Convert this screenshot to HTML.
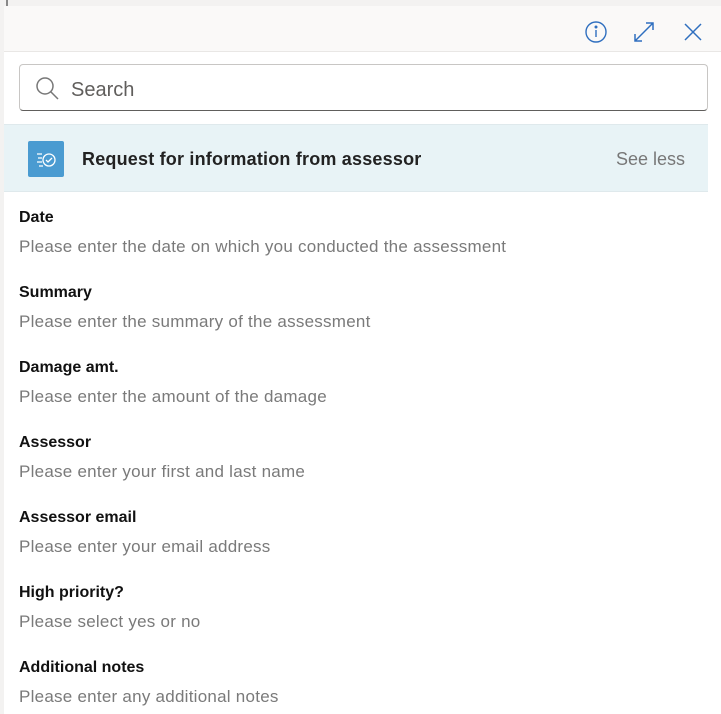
<!DOCTYPE html>
<html><head><style>
body{margin:0;width:721px;height:714px;overflow:hidden;background:#f3f2f1;font-family:"Liberation Sans",sans-serif;position:relative}
.panel{position:absolute;left:4px;top:6px;width:717px;height:708px;background:#fff}
.hdr{position:absolute;left:0;top:0;width:717px;height:45px;background:#faf9f8;border-bottom:1px solid #e9e7e5}
.search{position:absolute;left:15px;top:58px;width:687px;height:45px;border:1px solid #c8c6c4;border-bottom:1px solid #605e5c;border-radius:4px;background:#fff}
.search span{position:absolute;left:51px;top:14px;font-size:20px;color:#605e5c}
.band{position:absolute;left:0;top:118px;width:704px;height:66px;background:#e8f3f6;border-top:1px solid #dfe9ec;border-bottom:1px solid #dfe9ec}
.ico{position:absolute;left:24px;top:16px;width:36px;height:36px;background:#4a9bd1;border-radius:2px}
.title{position:absolute;left:78px;top:24px;font-size:18px;color:#222;font-weight:bold;letter-spacing:0.2px}
.less{position:absolute;right:23px;top:24px;font-size:18px;color:#777}
.f{position:absolute;left:15px}
.f b{display:block;font-size:16px;color:#111;font-weight:bold}
.f i{display:block;font-style:normal;font-size:17px;letter-spacing:0.25px;color:#7a7a7a;margin-top:10px}
</style></head><body>
<div style="position:absolute;left:6px;top:0;width:2px;height:6px;background:#888"></div>
<div class="panel">
<div class="hdr">
<svg style="position:absolute;left:580px;top:14px" width="24" height="24" viewBox="0 0 24 24" fill="none" stroke="#2f6fbf" stroke-width="1.4"><circle cx="12" cy="12" r="10"/><line x1="12" y1="10" x2="12" y2="17"/><circle cx="12" cy="7" r="0.8" fill="#2f6fbf"/></svg>
<svg style="position:absolute;left:628px;top:14px" width="24" height="24" viewBox="0 0 24 24" fill="none" stroke="#2f6fbf" stroke-width="1.5"><path d="M3 21L21 3M14 3h7v7M3 14v7h7"/></svg>
<svg style="position:absolute;left:678px;top:15px" width="22" height="22" viewBox="0 0 22 22" fill="none" stroke="#2f6fbf" stroke-width="1.5"><path d="M3 3L19 19M19 3L3 19"/></svg>
</div>
<div class="search">
<svg style="position:absolute;left:14px;top:10px" width="26" height="26" viewBox="0 0 26 26" fill="none" stroke="#777" stroke-width="1.5"><circle cx="11" cy="11" r="8"/><path d="M17 17l7 7"/></svg>
<span>Search</span></div>
<div class="band"><div class="ico"><svg width="36" height="36" viewBox="0 0 36 36" fill="none" stroke="#fff" stroke-width="1.3"><circle cx="21" cy="19" r="6"/><path d="M18 19l2 2 4-4M9 13h5M10 17h4M9 21h5M11 25h4"/></svg></div>
<div class="title">Request for information from assessor</div><div class="less">See less</div></div>
<div class="f" style="top:203px"><b>Date</b><i>Please enter the date on which you conducted the assessment</i></div>
<div class="f" style="top:278px"><b>Summary</b><i>Please enter the summary of the assessment</i></div>
<div class="f" style="top:353px"><b>Damage amt.</b><i>Please enter the amount of the damage</i></div>
<div class="f" style="top:428px"><b>Assessor</b><i>Please enter your first and last name</i></div>
<div class="f" style="top:503px"><b>Assessor email</b><i>Please enter your email address</i></div>
<div class="f" style="top:578px"><b>High priority?</b><i>Please select yes or no</i></div>
<div class="f" style="top:653px"><b>Additional notes</b><i>Please enter any additional notes</i></div>
</div>
</body></html>
